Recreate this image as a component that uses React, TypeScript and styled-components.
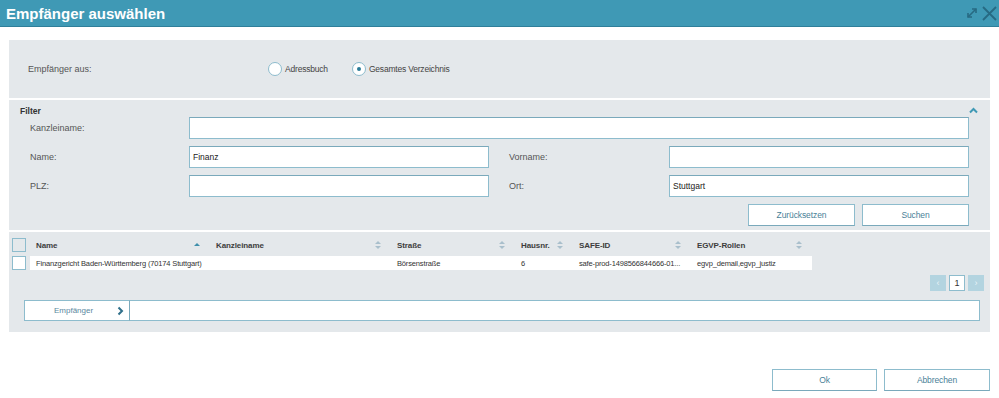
import React from "react"
import styled, { createGlobalStyle } from "styled-components"

const GlobalStyle = createGlobalStyle`
  html, body { margin: 0; padding: 0; background: #fff; }
  body { font-family: "Liberation Sans", Arial, sans-serif; color: #444; }
  * { box-sizing: border-box; }
`

const teal = "#3f99b5"
const border = "#8dbccd"
const panelBg = "#e4e8eb"

const Dialog = styled.div`
  width: 999px;
  height: 398px;
  display: flex;
  flex-direction: column;
  overflow: hidden;
`

const TitleBar = styled.div`
  height: 27px;
  flex-shrink: 0;
  background: ${teal};
  border-bottom: 1px solid #2f7f9a;
  display: flex;
  align-items: center;
  justify-content: space-between;
  padding: 0 1px 0 6px;
`

const Title = styled.h1`
  margin: 0;
  font-size: 15px;
  font-weight: bold;
  color: #fff;
`

const TitleIcons = styled.div`
  display: flex;
  align-items: center;
  gap: 2px;
  color: #276a83;
`

const Body = styled.div`
  padding: 13px 9px 0 9px;
  flex: 1;
  display: flex;
  flex-direction: column;
`

const Panel = styled.div`
  width: 100%;
  background: ${panelBg};
  display: flex;
  flex-direction: column;
  padding-bottom: 11px;
`

const SourceRow = styled.div`
  height: 60px;
  display: flex;
  align-items: center;
  padding: 0 0 0 19px;
  border-bottom: 2px solid #fff;
  font-size: 9px;
  color: #555;
`

const SourceLabel = styled.span`
  width: 240px;
`

const RadioOption = styled.label<{ $gap?: number }>`
  display: flex;
  align-items: center;
  gap: 3px;
  font-size: 8.5px;
  letter-spacing: -0.2px;
  color: #444;
  margin-right: ${(p) => p.$gap ?? 0}px;
`

const RadioCircle = styled.span<{ $checked?: boolean }>`
  width: 14px;
  height: 14px;
  border-radius: 50%;
  border: 1px solid ${border};
  background: #fff;
  display: flex;
  align-items: center;
  justify-content: center;
  &::after {
    content: "";
    width: 4px;
    height: 4px;
    border-radius: 50%;
    background: ${(p) => (p.$checked ? "#2a7b98" : "transparent")};
  }
`

const FilterSection = styled.div`
  position: relative;
  padding: 6px 21px 4px 11px;
  border-bottom: 2px solid #fff;
`

const FilterTitle = styled.div`
  font-size: 8.5px;
  font-weight: bold;
  color: #333;
  height: 11px;
`

const Collapse = styled.span`
  position: absolute;
  right: 12px;
  top: 7px;
  color: ${teal};
  display: flex;
`

const FilterGrid = styled.div`
  display: grid;
  grid-template-columns: 159px 300px 180px 300px;
  grid-auto-rows: 22px;
  row-gap: 7px;
  padding-left: 10px;
`

const FieldLabel = styled.label<{ $indent?: boolean }>`
  font-size: 9px;
  color: #555;
  display: flex;
  align-items: center;
  padding-left: ${(p) => (p.$indent ? 20 : 0)}px;
`

const TextInput = styled.div<{ $span?: number }>`
  grid-column: span ${(p) => p.$span ?? 1};
  background: #fff;
  border: 1px solid ${border};
  border-top-color: #7aa9bb;
  font-size: 8.5px;
  color: #222;
  display: flex;
  align-items: center;
  padding-left: 3px;
`

const ButtonRow = styled.div`
  grid-column: 1 / span 4;
  display: flex;
  justify-content: flex-end;
  gap: 7px;
`

const Button = styled.button<{ $w?: number }>`
  width: ${(p) => p.$w ?? 107}px;
  height: 22px;
  background: #fff;
  border: 1px solid ${border};
  border-bottom-color: #7aa9bb;
  color: #4a7f98;
  font-family: inherit;
  font-size: 8.5px;
  letter-spacing: -0.1px;
  padding: 0;
`

const Table = styled.div`
  padding: 3px 0 0 3px;
`

const Row = styled.div<{ $head?: boolean }>`
  display: grid;
  grid-template-columns: 18px 180px 181px 124px 58px 118px 121px;
  height: ${(p) => (p.$head ? 20 : 16)}px;
  align-items: center;
`

const Check = styled.span<{ $white?: boolean }>`
  width: 14px;
  height: 14px;
  border: 1px solid ${border};
  background: ${(p) => (p.$white ? "#fff" : panelBg)};
  display: block;
`

const HeadCell = styled.div`
  font-size: 8px;
  font-weight: bold;
  letter-spacing: -0.1px;
  color: #3d3d3d;
  display: flex;
  align-items: center;
  justify-content: space-between;
  padding: 0 9px 0 6px;
`

const Cell = styled.div`
  background: #fff;
  height: 14px;
  font-size: 7.5px;
  letter-spacing: -0.15px;
  color: #333;
  display: flex;
  align-items: center;
  padding-left: 6px;
  white-space: nowrap;
  overflow: hidden;
`

const Pager = styled.div`
  display: flex;
  justify-content: flex-end;
  gap: 3px;
  padding: 4px 6px 0 0;
`

const PageButton = styled.span<{ $active?: boolean }>`
  width: 16px;
  height: 16px;
  display: flex;
  align-items: center;
  justify-content: center;
  font-size: 9px;
  color: ${(p) => (p.$active ? "#333" : "#e8f3f7")};
  background: ${(p) => (p.$active ? "#fff" : "#b3d4e0")};
  border: 1px solid ${(p) => (p.$active ? border : "#b3d4e0")};
`

const RecipientRow = styled.div`
  display: flex;
  height: 21px;
  margin: 9px 10px 0 15px;
`

const RecipientButton = styled.div`
  width: 106px;
  background: #fff;
  border: 1px solid ${border};
  border-right: 1px solid #7aa9bb;
  display: flex;
  align-items: center;
  justify-content: space-between;
  padding: 0 5px 0 29px;
  font-size: 8px;
  color: #5a88a0;
`

const RecipientInput = styled.div`
  flex: 1;
  background: #fff;
  border: 1px solid ${border};
  border-left: none;
`

const Footer = styled.div`
  margin-top: auto;
  margin-bottom: 7px;
  display: flex;
  justify-content: flex-end;
  gap: 7px;
`

const SortIcon = ({ up }: { up?: boolean }) =>
  up ? (
    <svg width="8" height="8" viewBox="0 0 8 8">
      <path d="M1 5 L4 2 L7 5 Z" fill="#3f8fab" />
    </svg>
  ) : (
    <svg width="8" height="10" viewBox="0 0 8 10">
      <path d="M1 4 L4 1 L7 4 Z" fill="#a9bfcc" />
      <path d="M1 6 L4 9 L7 6 Z" fill="#a9bfcc" />
    </svg>
  )

const columns = [
  { name: "Name", up: true },
  { name: "Kanzleiname" },
  { name: "Straße" },
  { name: "Hausnr." },
  { name: "SAFE-ID" },
  { name: "EGVP-Rollen" },
]

const values = [
  "Finanzgericht Baden-Württemberg (70174 Stuttgart)",
  "",
  "Börsenstraße",
  "6",
  "safe-prod-1498566844666-01...",
  "egvp_demail,egvp_justiz",
]

export default function App() {
  return (
    <>
      <GlobalStyle />
      <Dialog>
        <TitleBar>
          <Title>Empfänger auswählen</Title>
          <TitleIcons>
            <svg width="14" height="14" viewBox="0 0 14 14" fill="none" stroke="currentColor" strokeWidth="1.6">
              <path d="M3 11 L11 3" />
              <path d="M7 3 H11 V7" />
              <path d="M3 7 V11 H7" />
            </svg>
            <svg width="17" height="17" viewBox="0 0 17 17" stroke="currentColor" strokeWidth="1.8">
              <path d="M2 2 L15 15 M15 2 L2 15" />
            </svg>
          </TitleIcons>
        </TitleBar>
        <Body>
          <Panel>
            <SourceRow>
              <SourceLabel>Empfänger aus:</SourceLabel>
              <RadioOption $gap={24}>
                <RadioCircle />
                Adressbuch
              </RadioOption>
              <RadioOption>
                <RadioCircle $checked />
                Gesamtes Verzeichnis
              </RadioOption>
            </SourceRow>

            <FilterSection>
              <FilterTitle>Filter</FilterTitle>
              <Collapse>
                <svg width="9" height="7" viewBox="0 0 9 7" fill="none" stroke="currentColor" strokeWidth="2">
                  <path d="M1 5.5 L4.5 2 L8 5.5" />
                </svg>
              </Collapse>
              <FilterGrid>
                <FieldLabel>Kanzleiname:</FieldLabel>
                <TextInput $span={3} />
                <FieldLabel>Name:</FieldLabel>
                <TextInput>Finanz</TextInput>
                <FieldLabel $indent>Vorname:</FieldLabel>
                <TextInput />
                <FieldLabel>PLZ:</FieldLabel>
                <TextInput />
                <FieldLabel $indent>Ort:</FieldLabel>
                <TextInput>Stuttgart</TextInput>
                <ButtonRow>
                  <Button>Zurücksetzen</Button>
                  <Button>Suchen</Button>
                </ButtonRow>
              </FilterGrid>
            </FilterSection>

            <Table>
              <Row $head>
                <Check />
                {columns.map((c) => (
                  <HeadCell key={c.name}>
                    {c.name}
                    <SortIcon up={c.up} />
                  </HeadCell>
                ))}
              </Row>
              <Row>
                <Check $white />
                {values.map((v, i) => (
                  <Cell key={i}>{v}</Cell>
                ))}
              </Row>
            </Table>

            <Pager>
              <PageButton>‹</PageButton>
              <PageButton $active>1</PageButton>
              <PageButton>›</PageButton>
            </Pager>

            <RecipientRow>
              <RecipientButton>
                Empfänger
                <svg width="7" height="10" viewBox="0 0 7 10" fill="none" stroke="#2f6f8a" strokeWidth="2">
                  <path d="M1.5 1.5 L5 5 L1.5 8.5" />
                </svg>
              </RecipientButton>
              <RecipientInput />
            </RecipientRow>
          </Panel>

          <Footer>
            <Button $w={105}>Ok</Button>
            <Button $w={106}>Abbrechen</Button>
          </Footer>
        </Body>
      </Dialog>
    </>
  )
}
